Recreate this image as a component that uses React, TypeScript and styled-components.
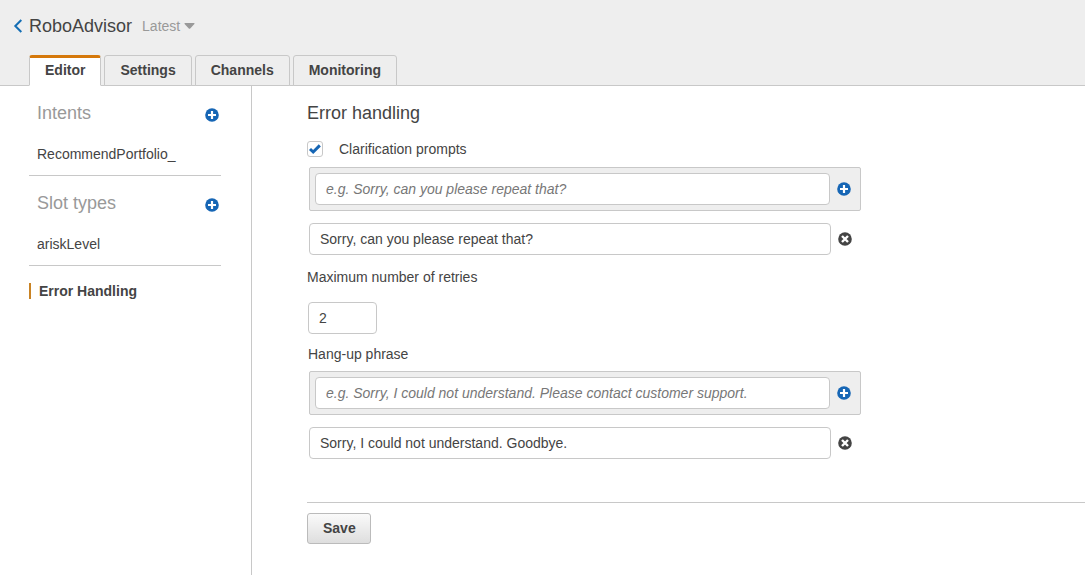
import React, { useState } from "react";
import styled, { createGlobalStyle } from "styled-components";

const Global = createGlobalStyle`
  *, *::before, *::after { box-sizing: border-box; }
  html, body, #root { height: 100%; }
  body {
    margin: 0;
    background: #fff;
    color: #444;
    font: 14px/20px "Liberation Sans", Arial, sans-serif;
  }
  h1, h2, p, ul { margin: 0; padding: 0; font-weight: normal; }
  ul { list-style: none; }
  a { color: inherit; text-decoration: none; }
  button, input { font: inherit; color: inherit; }
`;

const Page = styled.div`
  min-height: 100%;
  display: flex;
  flex-direction: column;
`;

const Header = styled.header`
  background: #eee;
  border-bottom: 1px solid #c8c8c8;
`;

const TitleRow = styled.div`
  display: flex;
  align-items: center;
  padding: 15px 13px 18px;
`;

const BackLink = styled.a`
  display: flex;
  width: 16px;
  color: #146eb4;
`;

const BotName = styled.h1`
  font-size: 18px;
  line-height: 22px;
`;

const VersionButton = styled.button`
  display: flex;
  align-items: center;
  gap: 4px;
  margin-left: 10px;
  padding: 0;
  border: 0;
  background: none;
  color: #999;
`;

const Tabs = styled.nav`
  display: flex;
  gap: 3px;
  padding-left: 29px;
  margin-bottom: -1px;
`;

const Tab = styled.a<{ $active?: boolean }>`
  height: 31px;
  padding: ${(p) => (p.$active ? "2px 15px 0" : "4px 15px 0")};
  border: 1px solid #c8c8c8;
  border-top: ${(p) => (p.$active ? "3px solid #d5780b" : "1px solid #c8c8c8")};
  border-bottom-color: ${(p) => (p.$active ? "#fff" : "#c8c8c8")};
  border-radius: 3px 3px 0 0;
  background: ${(p) => (p.$active ? "#fff" : "#eee")};
  font-weight: bold;
`;

const Body = styled.div`
  display: flex;
  flex: 1;
`;

const Sidebar = styled.aside`
  flex: 0 0 252px;
  padding: 0 30px 0 29px;
  border-right: 1px solid #c8c8c8;
`;

const Section = styled.section`
  padding: 16px 0 11px 8px;
  border-bottom: 1px solid #c8c8c8;
`;

const SectionHead = styled.div`
  display: flex;
  align-items: center;
  justify-content: space-between;
  margin-bottom: 20px;
  padding-right: 1px;
  color: #999;
`;

const Heading = styled.h2`
  font-size: 18px;
  line-height: 22px;
`;

const IconButton = styled.button<{ $dark?: boolean }>`
  display: flex;
  padding: 1px;
  border: 0;
  background: none;
  color: ${(p) => (p.$dark ? "#444" : "#1666b5")};
`;

const AddButton = styled(IconButton)`
  padding-top: 5px;
`;

const CurrentLink = styled.a`
  display: block;
  margin-top: 17px;
  padding-left: 8px;
  border-left: 2px solid #c98324;
  font-weight: bold;
  line-height: 16px;
`;

const Main = styled.main`
  flex: 1;
  min-width: 0;
  padding: 16px 0 31px 55px;
`;

const CheckRow = styled.label`
  display: flex;
  align-items: center;
  gap: 16px;
  margin: 17px 0 10px;
  line-height: 16px;
`;

const Checkbox = styled.input`
  appearance: none;
  width: 16px;
  height: 16px;
  margin: 0;
  border: 1px solid #c8c8c8;
  border-radius: 3px;
  background: #fff;
`;

const CheckBox = styled.span`
  display: grid;
  & > * { grid-area: 1 / 1; }
  svg { pointer-events: none; }
  input:not(:checked) + svg { visibility: hidden; }
`;

const PromptGroup = styled.div`
  max-width: 554px;
  padding-left: 2px;
`;

const AddRow = styled.div`
  display: flex;
  align-items: center;
  gap: 6px;
  padding: 5px 8px 5px 5px;
  border: 1px solid #c8c8c8;
  border-radius: 2px;
  background: #eee;
`;

const ValueRow = styled.div`
  display: flex;
  align-items: center;
  gap: 6px;
  margin-top: 12px;
  padding-right: 8px;
`;

const TextInput = styled.input`
  flex: 1;
  min-width: 0;
  height: 32px;
  padding: 0 10px;
  border: 1px solid #c8c8c8;
  border-radius: 4px;
  background: #fff;
  &::placeholder { color: #777; font-style: italic; opacity: 1; }
`;

const RetriesField = styled.div`
  padding: 15px 0 10px 1px;
`;

const NumberInput = styled(TextInput)`
  display: block;
  width: 69px;
`;

const FieldLabel = styled.label`
  display: block;
`;

const RetriesLabel = styled(FieldLabel)`
  margin-top: 12px;
`;

const HangUpLabel = styled(FieldLabel)`
  padding: 0 0 7px 1px;
`;

const Actions = styled.div`
  margin-top: 43px;
  padding-top: 10px;
  border-top: 1px solid #c8c8c8;
`;

const SaveButton = styled.button`
  height: 31px;
  padding: 0 14px 2px 15px;
  border: 1px solid #bbb;
  border-radius: 3px;
  background: linear-gradient(#fafafa, #dedede);
  font-weight: bold;
`;

const PlusIcon = () => (
  <svg width="14" height="14" viewBox="0 0 14 14" aria-hidden="true">
    <circle cx="7" cy="7" r="6.8" fill="currentColor" />
    <path d="M7 3v8M3 7h8" stroke="#fff" strokeWidth="2.2" />
  </svg>
);

const RemoveIcon = () => (
  <svg width="14" height="14" viewBox="0 0 14 14" aria-hidden="true">
    <circle cx="7" cy="7" r="6.8" fill="currentColor" />
    <path d="M4 4l6 6M10 4l-6 6" stroke="#fff" strokeWidth="2.4" />
  </svg>
);

function PromptFields({ name, addId, placeholder, initial }: {
  name: string;
  addId: string;
  placeholder: string;
  initial: string;
}) {
  return (
    <PromptGroup>
      <AddRow>
        <TextInput id={addId} aria-label={`New ${name}`} placeholder={placeholder} />
        <IconButton type="button" aria-label={`Add ${name}`}><PlusIcon /></IconButton>
      </AddRow>
      <ValueRow>
        <TextInput aria-label={name} defaultValue={initial} />
        <IconButton $dark type="button" aria-label={`Remove ${name}`}><RemoveIcon /></IconButton>
      </ValueRow>
    </PromptGroup>
  );
}

function SidebarSection({ title, items }: { title: string; items: string[] }) {
  return (
    <Section>
      <SectionHead>
        <Heading>{title}</Heading>
        <AddButton type="button" aria-label={`Add to ${title}`}><PlusIcon /></AddButton>
      </SectionHead>
      <ul>
        {items.map((item) => (
          <li key={item}><a href="#item">{item}</a></li>
        ))}
      </ul>
    </Section>
  );
}

export default function App() {
  const [clarify, setClarify] = useState(true);
  return (
    <Page>
      <Global />
      <Header>
        <TitleRow>
          <BackLink href="#bots" aria-label="Back">
            <svg width="10" height="14" viewBox="0 0 10 14" aria-hidden="true">
              <path d="M8.3 1L2.3 7l6 6" fill="none" stroke="currentColor" strokeWidth="2" />
            </svg>
          </BackLink>
          <BotName>RoboAdvisor</BotName>
          <VersionButton type="button">
            Latest
            <svg width="11" height="6" viewBox="0 0 11 6" aria-hidden="true">
              <path d="M1 0h9q1 0.3 0.4 1L6.2 5.4q-0.7 0.6-1.4 0L0.6 1Q0 0.3 1 0z" fill="#999" />
            </svg>
          </VersionButton>
        </TitleRow>
        <Tabs>
          <Tab $active href="#editor">Editor</Tab>
          <Tab href="#settings">Settings</Tab>
          <Tab href="#channels">Channels</Tab>
          <Tab href="#monitoring">Monitoring</Tab>
        </Tabs>
      </Header>
      <Body>
        <Sidebar>
          <SidebarSection title="Intents" items={["RecommendPortfolio_"]} />
          <SidebarSection title="Slot types" items={["ariskLevel"]} />
          <CurrentLink href="#errors">Error Handling</CurrentLink>
        </Sidebar>
        <Main>
          <Heading>Error handling</Heading>
          <CheckRow>
            <CheckBox>
              <Checkbox type="checkbox" checked={clarify} onChange={(e) => setClarify(e.target.checked)} />
              <svg width="16" height="16" viewBox="0 0 16 16" aria-hidden="true">
                <path d="M3 8l3.2 3L12.8 4.4" fill="none" stroke="#1666b5" strokeWidth="3" />
              </svg>
            </CheckBox>
            Clarification prompts
          </CheckRow>
          <PromptFields
            name="clarification prompt"
            addId="new-prompt"
            placeholder="e.g. Sorry, can you please repeat that?"
            initial="Sorry, can you please repeat that?"
          />
          <RetriesLabel htmlFor="retries">Maximum number of retries</RetriesLabel>
          <RetriesField>
            <NumberInput id="retries" inputMode="numeric" defaultValue="2" />
          </RetriesField>
          <HangUpLabel htmlFor="new-phrase">Hang-up phrase</HangUpLabel>
          <PromptFields
            name="hang-up phrase"
            addId="new-phrase"
            placeholder="e.g. Sorry, I could not understand. Please contact customer support."
            initial="Sorry, I could not understand. Goodbye."
          />
          <Actions>
            <SaveButton type="button">Save</SaveButton>
          </Actions>
        </Main>
      </Body>
    </Page>
  );
}
